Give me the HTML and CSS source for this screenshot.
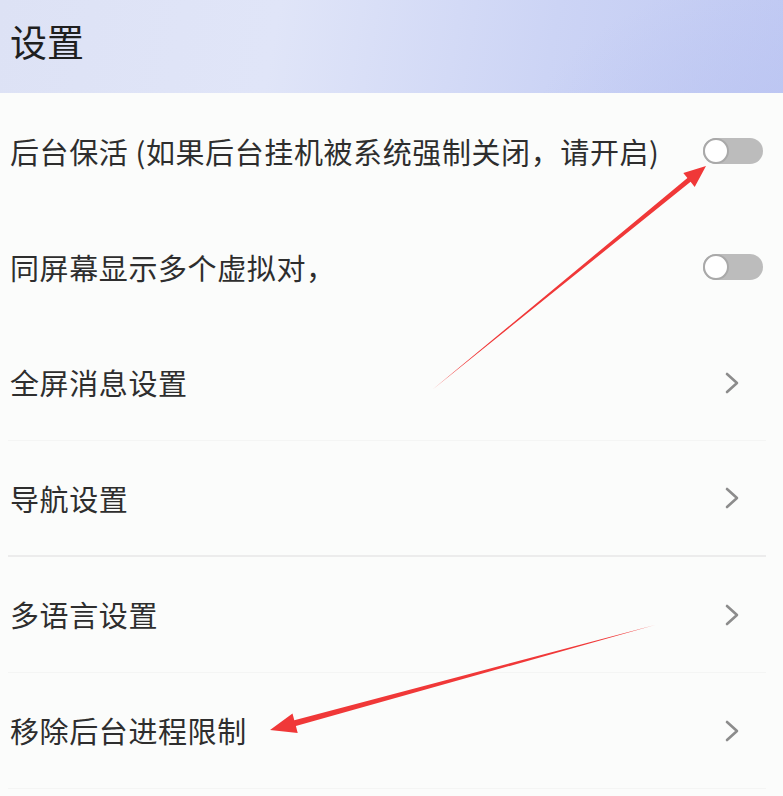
FILE: index.html
```html
<!DOCTYPE html>
<html lang="zh-CN">
<head>
    <meta charset="UTF-8">
    <meta name="viewport" content="width=device-width, initial-scale=1.0">
    <title>设置</title>
    <link rel="stylesheet" href="styles.css">
</head>
<body>
    <div class="page">
        <div class="header">
            <h1>设置</h1>
        </div>

        <div class="list">
            <div class="row">
                <span class="label">后台保活 (如果后台挂机被系统强制关闭，请开启)</span>
                <span class="switch"><span class="knob"></span></span>
            </div>
            <div class="row">
                <span class="label">同屏幕显示多个虚拟对，</span>
                <span class="switch"><span class="knob"></span></span>
            </div>
            <div class="row line-faint">
                <span class="label">全屏消息设置</span>
                <svg class="chevron" viewBox="0 0 16 24"><polyline points="3,3 13,12 3,21"/></svg>
            </div>
            <div class="row line">
                <span class="label">导航设置</span>
                <svg class="chevron" viewBox="0 0 16 24"><polyline points="3,3 13,12 3,21"/></svg>
            </div>
            <div class="row line-faint">
                <span class="label">多语言设置</span>
                <svg class="chevron" viewBox="0 0 16 24"><polyline points="3,3 13,12 3,21"/></svg>
            </div>
            <div class="row line-faint">
                <span class="label">移除后台进程限制</span>
                <svg class="chevron" viewBox="0 0 16 24"><polyline points="3,3 13,12 3,21"/></svg>
            </div>
        </div>

        <!-- red annotation arrows drawn over the screenshot -->
        <svg class="marks" viewBox="0 0 783 796">
            <polygon points="432,390 687.4,178 683.3,172.9 706,166 694.7,186.9 690.6,181.8"/>
            <polygon points="655,625 294.3,720.3 292.5,713.5 270,730 297.7,732.9 295.9,726.1"/>
        </svg>
    </div>
</body>
</html>
```

FILE: styles.css
```css
html, body {
    margin: 0;
    padding: 0;
}
body {
    font-family: "Noto Sans CJK SC", "Noto Sans", sans-serif;
    background: #fbfcfb;
    color: #2e2e2e;
}
.page {
    position: relative;
    width: 783px;
    height: 796px;
    overflow: hidden;
}
.header {
    height: 93px;
    display: flex;
    align-items: center;
    padding-left: 10px;
    background:
        radial-gradient(ellipse 420px 260px at 820px 150px, rgba(186, 196, 242, 0.9), rgba(186, 196, 242, 0) 70%),
        linear-gradient(100deg, #dde2f5 0%, #e0e5f8 35%, #ccd4f5 70%, #c1caf3 100%);
}
.header h1 {
    margin: 0;
    font-size: 37px;
    font-weight: 400;
    line-height: 1;
    color: #1f1f1f;
    padding-bottom: 10px;
}
.list {
    display: flex;
    flex-direction: column;
}
.row {
    height: 116px;
    box-sizing: border-box;
    display: flex;
    align-items: center;
    justify-content: space-between;
    margin: 0 17px 0 8px;
    padding-left: 2px;
}
.row.line {
    border-bottom: 2px solid #ececec;
}
.row.line-faint {
    border-bottom: 1px solid #f4f5f4;
}
.label {
    font-size: 29px;
    line-height: 1;
    letter-spacing: 0.6px;
}
.switch {
    width: 60px;
    height: 26px;
    border-radius: 13px;
    background: #bcbcbc;
    display: flex;
    align-items: center;
    margin-right: 3px;
}
.knob {
    width: 22px;
    height: 22px;
    border-radius: 50%;
    background: #fff;
    border: 2px solid #a9a9a9;
}
.chevron {
    width: 16px;
    height: 24px;
    margin-right: 26px;
    fill: none;
    stroke: #8c8c8c;
    stroke-width: 2.6;
    stroke-linecap: round;
    stroke-linejoin: round;
}
.marks {
    position: absolute;
    top: 0;
    left: 0;
    width: 783px;
    height: 796px;
    pointer-events: none;
}
.marks polygon {
    fill: #f03838;
}
```
